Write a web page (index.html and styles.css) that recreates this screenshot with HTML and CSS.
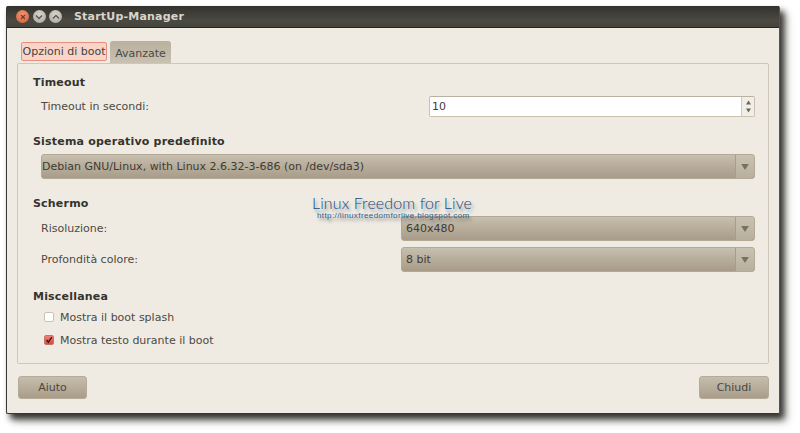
FILE: index.html
```html
<!DOCTYPE html>
<html lang="it">
<head>
<meta charset="utf-8">
<title>StartUp-Manager</title>
<link rel="stylesheet" href="styles.css">
</head>
<body>
<div class="window">
  <header class="titlebar">
    <div class="wm-buttons">
      <span class="wm close"><svg width="8" height="8" viewBox="0 0 8 8"><path d="M2 2l4 4M6 2l-4 4" stroke="#7a3a22" stroke-width="1.2"/></svg></span>
      <span class="wm"><svg width="8" height="8" viewBox="0 0 8 8"><path d="M1 2.5l3 3 3-3" fill="none" stroke="#5a574e" stroke-width="1.3"/></svg></span>
      <span class="wm"><svg width="8" height="8" viewBox="0 0 8 8"><path d="M1 5.5l3-3 3 3" fill="none" stroke="#5a574e" stroke-width="1.3"/></svg></span>
    </div>
    <span class="title">StartUp-Manager</span>
  </header>
  <main class="content">
    <div class="tabs">
      <span class="tab active">Opzioni di boot</span>
      <span class="tab">Avanzate</span>
    </div>
    <div class="panel">
      <section class="group first">
        <h2>Timeout</h2>
        <div class="row">
          <label>Timeout in secondi:</label>
          <div class="spin">
            <span class="spin-value">10</span>
            <span class="spin-btns">
              <svg width="5" height="5" viewBox="0 0 6 5"><path d="M3 0l3 5H0z" fill="#6a665a"/></svg>
              <svg width="5" height="5" viewBox="0 0 6 5"><path d="M0 0h6L3 5z" fill="#6a665a"/></svg>
            </span>
          </div>
        </div>
      </section>
      <section class="group">
        <h2>Sistema operativo predefinito</h2>
        <div class="combo wide">
          <span class="combo-text">Debian GNU/Linux, with Linux 2.6.32-3-686 (on /dev/sda3)</span>
          <span class="combo-arrow"><svg width="8" height="6" viewBox="0 0 9 7"><path d="M0 0h9L4.5 7z" fill="#77725f"/></svg></span>
        </div>
      </section>
      <section class="group">
        <h2>Schermo</h2>
        <div class="row">
          <label>Risoluzione:</label>
          <div class="combo">
            <span class="combo-text">640x480</span>
            <span class="combo-arrow"><svg width="8" height="6" viewBox="0 0 9 7"><path d="M0 0h9L4.5 7z" fill="#77725f"/></svg></span>
          </div>
        </div>
        <div class="row row-next">
          <label>Profondità colore:</label>
          <div class="combo">
            <span class="combo-text">8 bit</span>
            <span class="combo-arrow"><svg width="8" height="6" viewBox="0 0 9 7"><path d="M0 0h9L4.5 7z" fill="#77725f"/></svg></span>
          </div>
        </div>
      </section>
      <section class="group">
        <h2>Miscellanea</h2>
        <div class="check check-first"><span class="box"></span>Mostra il boot splash</div>
        <div class="check check-next"><span class="box on"><svg width="10" height="10" viewBox="0 0 10 10"><path d="M2 5l2.2 2.6L8.5 1.5" fill="none" stroke="#3a1410" stroke-width="1.7"/></svg></span>Mostra testo durante il boot</div>
      </section>
    </div>
    <footer class="actions">
      <span class="btn btn-help">Aiuto</span>
      <span class="btn">Chiudi</span>
    </footer>
  </main>
  <div class="watermark">
    <div class="wm-name">Linux Freedom for Live</div>
    <div class="wm-url">http://linuxfreedomforlive.blogspot.com</div>
  </div>
</div>
</body>
</html>
```

FILE: styles.css
```css
* { box-sizing: border-box; }
html, body { margin: 0; height: 100%; background: #fff; }
body { padding: 6px 20px 19px 6px; overflow: hidden; font-family: "DejaVu Sans", sans-serif; font-size: 11px; color: #4c4a42; }

.window {
  position: relative;
  width: 774px;
  height: 408px;
  display: flex;
  flex-direction: column;
  background: #efebe3;
  border-left: 1px solid #3a3833;
  border-bottom: 1px solid #3a3833;
  border-right: 1px solid #55534c;
  border-radius: 2px;
  box-shadow: 4px 5px 6px rgba(25,24,20,.85), 7px 8px 8px rgba(70,68,64,.3);
}

.titlebar {
  height: 22px;
  flex: none;
  display: flex;
  align-items: center;
  padding-left: 9px;
  background: linear-gradient(#33322d, #4a4942 70%, #45443d);
  border-bottom: 1px solid #25241f;
}
.wm-buttons { display: flex; gap: 3.5px; }
.wm {
  width: 13px;
  height: 13px;
  border-radius: 50%;
  display: flex;
  align-items: center;
  justify-content: center;
  background: radial-gradient(circle at 50% 35%, #d8d4ca, #a9a59a);
}
.wm.close { background: radial-gradient(circle at 50% 35%, #ef9672, #d0603a); }
.title { margin-left: 12px; font-weight: bold; font-size: 11px; letter-spacing: .2px; color: #d9d5ca; }

.content { flex: 1; display: flex; flex-direction: column; padding: 13px 10px 15px; }

.tabs { height: 22px; display: flex; align-items: flex-end; padding-left: 4px; flex: none; gap: 3px; }
.tab {
  width: 61px;
  height: 22px;
  display: flex;
  align-items: center;
  justify-content: center;
  background: linear-gradient(#b9b09e, #c9c1b1);
  border-radius: 3px 3px 0 0;
  padding-top: 2px;
}
.tab.active {
  width: 86px;
  height: 19px;
  margin-bottom: 2px;
  padding-top: 0;
  background: #f8d5c8;
  border: 1px solid #e98f80;
  border-radius: 2px;
  color: #45433c;
}

.panel {
  height: 301px;
  flex: none;
  border: 1px solid #cfc8b9;
  border-radius: 2px;
  padding: 12px 13px 0 15px;
}
.group { margin-top: 18px; }
.group.first { margin-top: 0; }
h2 { margin: 0; font-size: 11px; line-height: 14px; font-weight: bold; letter-spacing: .2px; color: #35332d; }

.row { display: flex; align-items: center; justify-content: space-between; padding-left: 8px; margin-top: 5px; }
.group.first .row { margin-top: 6px; }
.row-next { margin-top: 6px; }
label { display: block; }

.spin { width: 326px; height: 21px; display: flex; background: #fff; border: 1px solid #c9c2b3; border-top-color: #b9b2a2; border-radius: 2px; }
.spin-value { flex: 1; padding: 3px 0 0 2px; color: #3f3d37; }
.spin-btns { width: 13px; display: flex; flex-direction: column; align-items: center; justify-content: space-around; background: #f1eee7; border-left: 1px solid #cfc9bb; padding: 2px 0; }

.combo {
  width: 354px;
  height: 25px;
  display: flex;
  align-items: center;
  background: linear-gradient(#c7bfaf, #b9ae9c 45%, #a89c89);
  border: 1px solid #b3a994;
  border-radius: 3px;
  color: #3d3b34;
}
.combo.wide { width: auto; margin: 5px 0 0 8px; }
.combo-text { flex: 1; padding-left: 0; }
.row .combo-text { padding-left: 4px; }
.combo-arrow { width: 19px; height: 100%; display: flex; align-items: center; justify-content: center; background: linear-gradient(#c9c2b3, #b8af9e); border-left: 1px solid #a89d8a; border-radius: 0 3px 3px 0; }

.check { display: flex; align-items: center; height: 14px; padding-left: 11px; }
.check-first { margin-top: 6px; }
.check-next { margin-top: 9px; }
.box { width: 10px; height: 10px; margin-right: 6px; display: flex; align-items: center; justify-content: center; background: #fff; border: 1px solid #c9c3b5; border-radius: 2px; }
.box.on { background: linear-gradient(#f0827a, #d8483e); border-color: #c9706a; }

.actions { display: flex; justify-content: space-between; margin-top: 12px; padding-left: 1px; }
.btn {
  width: 70px;
  height: 23px;
  display: flex;
  align-items: center;
  justify-content: center;
  background: linear-gradient(#c6bdac, #a99d8a);
  border: 1px solid #b5ab98;
  border-radius: 3px;
  color: #4a473f;
}
.btn-help { width: 69px; }

.watermark { position: absolute; left: 305px; top: 188px; color: #174a7c; text-shadow: 2px 3px 3px rgba(60,70,90,.55); }
.wm-name { font-family: "Lato", sans-serif; font-weight: 300; font-size: 16px; line-height: 17px; letter-spacing: .1px; }
.wm-url { font-family: "Liberation Sans", sans-serif; font-size: 8px; line-height: 9px; margin-left: 5px; letter-spacing: .4px; color: #2d5f8d; }
```
